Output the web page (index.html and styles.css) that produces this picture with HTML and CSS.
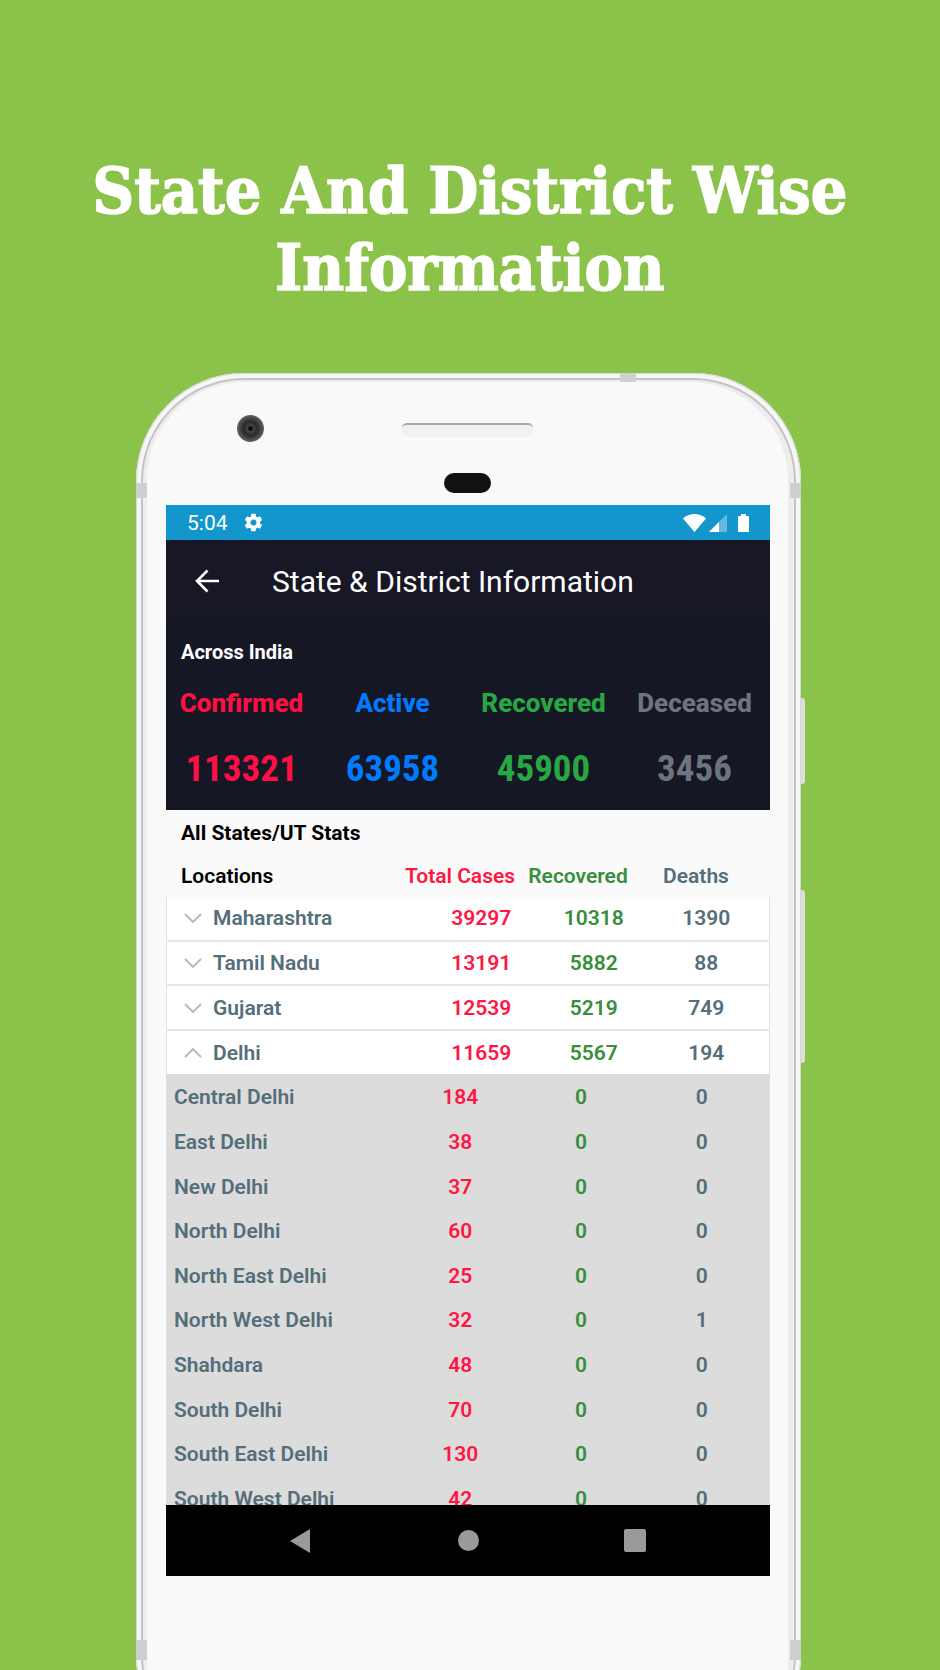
FILE: index.html
```html
<!DOCTYPE html>
<html>

<head>
    <title>State And District Wise Information</title>
    <link rel="stylesheet" href="styles.css">
</head>

<body>
    <h1 class="headline">State And District Wise<br>Information</h1>

    <div class="phone">
        <span class="band band-top"></span>
        <span class="band band-left"></span>
        <span class="band band-right"></span>
        <span class="band band-left-low"></span>
        <span class="band band-right-low"></span>
        <span class="side-btn power"></span>
        <span class="side-btn volume"></span>
        <div class="bezel">
            <span class="camera"></span>
            <span class="speaker"></span>
            <span class="sensor"></span>

            <div class="screen">
                <div class="status-bar">
                    <span class="clock">5:04</span>
                    <svg class="gear" viewBox="0 0 24 24" width="21" height="21">
                        <path fill="#fff" d="M19.4 13c.04-.33.06-.66.06-1s-.02-.67-.06-1l2.1-1.65c.2-.15.25-.42.12-.64l-2-3.46c-.12-.22-.38-.3-.6-.22l-2.5 1c-.52-.4-1.08-.73-1.7-.98l-.37-2.65C14.4 2.17 14.2 2 13.95 2h-4c-.25 0-.46.17-.5.42l-.37 2.65c-.6.25-1.17.6-1.7.98l-2.48-1c-.23-.08-.49 0-.6.22l-2 3.46c-.14.22-.08.49.11.64L4.5 11c-.04.33-.07.67-.07 1s.03.67.07 1l-2.1 1.65c-.2.15-.25.42-.12.64l2 3.46c.12.22.38.3.6.22l2.49-1c.52.4 1.08.73 1.7.98l.37 2.65c.04.25.25.42.5.42h4c.25 0 .46-.17.5-.42l.37-2.65c.6-.25 1.17-.58 1.7-.98l2.48 1c.23.08.49 0 .6-.22l2-3.46c.13-.22.08-.49-.12-.64L19.4 13zM12 15.5c-1.93 0-3.5-1.57-3.5-3.5s1.57-3.5 3.5-3.5 3.5 1.57 3.5 3.5-1.57 3.5-3.5 3.5z" />
                    </svg>
                    <span class="status-icons">
                        <svg viewBox="0 0 23 18" width="23" height="18">
                            <path fill="#fff" d="M0 4.500C3 1.600 7 0 11.500 0S20 1.600 23 4.500L11.500 18z" />
                        </svg>
                        <svg viewBox="0 0 18 18" width="18" height="18">
                            <path fill="#fff" fill-opacity=".35" d="M18 0v18H0z" />
                            <path fill="#fff" d="M10 8v10H0z" />
                        </svg>
                        <svg class="battery" viewBox="0 0 11 18" width="11" height="18">
                            <path fill="#fff" d="M3 2V0h5v2h2a1 1 0 0 1 1 1v14a1 1 0 0 1-1 1H1a1 1 0 0 1-1-1V3a1 1 0 0 1 1-1z" />
                        </svg>
                    </span>
                </div>

                <div class="toolbar">
                    <svg class="back" viewBox="0 0 24 24" width="24" height="24">
                        <path fill="none" stroke="#fff" stroke-width="2.600" d="M24 12H2M12.500 1.500 2 12l10.500 10.500" />
                    </svg>
                    <span class="toolbar-title">State &amp; District Information</span>
                </div>

                <div class="summary">
                    <div class="summary-title">Across India</div>
                    <div class="summary-grid">
                        <div class="label red">Confirmed</div>
                        <div class="label blue">Active</div>
                        <div class="label green">Recovered</div>
                        <div class="label gray">Deceased</div>
                        <div class="count red">113321</div>
                        <div class="count blue">63958</div>
                        <div class="count green">45900</div>
                        <div class="count gray">3456</div>
                    </div>
                </div>

                <div class="table">
                    <div class="table-title">All States/UT Stats</div>
                    <div class="row head-row">
                        <span class="loc">Locations</span>
                        <span class="t-red">Total Cases</span>
                        <span class="t-green">Recovered</span>
                        <span class="t-slate">Deaths</span>
                    </div>

                    <div class="row state-row">
                        <span class="name"><svg class="chev" viewBox="0 0 18 10" width="18" height="10"><path d="M1 1l8 8 8-8" /></svg>Maharashtra</span>
                        <span class="t-red">39297</span>
                        <span class="t-green">10318</span>
                        <span class="t-slate">1390</span>
                    </div>
                    <div class="row state-row">
                        <span class="name"><svg class="chev" viewBox="0 0 18 10" width="18" height="10"><path d="M1 1l8 8 8-8" /></svg>Tamil Nadu</span>
                        <span class="t-red">13191</span>
                        <span class="t-green">5882</span>
                        <span class="t-slate">88</span>
                    </div>
                    <div class="row state-row">
                        <span class="name"><svg class="chev" viewBox="0 0 18 10" width="18" height="10"><path d="M1 1l8 8 8-8" /></svg>Gujarat</span>
                        <span class="t-red">12539</span>
                        <span class="t-green">5219</span>
                        <span class="t-slate">749</span>
                    </div>
                    <div class="row state-row last">
                        <span class="name"><svg class="chev" viewBox="0 0 18 10" width="18" height="10"><path d="M1 9l8-8 8 8" /></svg>Delhi</span>
                        <span class="t-red">11659</span>
                        <span class="t-green">5567</span>
                        <span class="t-slate">194</span>
                    </div>

                    <div class="districts">
                        <div class="row district-row"><span class="name">Central Delhi</span><span class="t-red">184</span><span class="t-green">0</span><span class="t-slate">0</span></div>
                        <div class="row district-row"><span class="name">East Delhi</span><span class="t-red">38</span><span class="t-green">0</span><span class="t-slate">0</span></div>
                        <div class="row district-row"><span class="name">New Delhi</span><span class="t-red">37</span><span class="t-green">0</span><span class="t-slate">0</span></div>
                        <div class="row district-row"><span class="name">North Delhi</span><span class="t-red">60</span><span class="t-green">0</span><span class="t-slate">0</span></div>
                        <div class="row district-row"><span class="name">North East Delhi</span><span class="t-red">25</span><span class="t-green">0</span><span class="t-slate">0</span></div>
                        <div class="row district-row"><span class="name">North West Delhi</span><span class="t-red">32</span><span class="t-green">0</span><span class="t-slate">1</span></div>
                        <div class="row district-row"><span class="name">Shahdara</span><span class="t-red">48</span><span class="t-green">0</span><span class="t-slate">0</span></div>
                        <div class="row district-row"><span class="name">South Delhi</span><span class="t-red">70</span><span class="t-green">0</span><span class="t-slate">0</span></div>
                        <div class="row district-row"><span class="name">South East Delhi</span><span class="t-red">130</span><span class="t-green">0</span><span class="t-slate">0</span></div>
                        <div class="row district-row"><span class="name">South West Delhi</span><span class="t-red">42</span><span class="t-green">0</span><span class="t-slate">0</span></div>
                    </div>
                </div>

                <div class="nav-bar">
                    <svg viewBox="0 0 20 24" width="20" height="24"><path fill="#9a9a9a" d="M20 0v24L0 12z" /></svg>
                    <span class="nav-home"></span>
                    <span class="nav-recent"></span>
                </div>
            </div>
        </div>
    </div>
</body>

</html>
```

FILE: styles.css
```css
html,
body {
    height: 1670px;
    overflow: hidden;
}

body {
    margin: 0;
    background: #8bc34a;
    font-family: Roboto, "Liberation Sans", sans-serif;
}

.headline {
    margin: 0;
    padding-top: 152px;
    height: 373px;
    box-sizing: border-box;
    text-align: center;
    color: #fff;
    font-family: "DejaVu Serif", serif;
    font-stretch: condensed;
    font-weight: 700;
    font-size: 64px;
    line-height: 77px;
    -webkit-text-stroke: 1.5px #fff;
}

/* phone body */
.phone {
    position: relative;
    width: 665px;
    height: 1390px;
    margin-left: 136px;
    box-sizing: border-box;
    padding: 9px 13px 0 11px;
    border-radius: 108px;
    background: #ededed;
    box-shadow: inset 0 0 0 1px #d8d8d8, inset 0 0 0 5px #f6f6f6, inset 0 0 0 7px #c4c4c4;
}

.bezel {
    position: relative;
    height: 100%;
    padding: 123px 16px 0 19px;
    box-sizing: border-box;
    border-radius: 98px;
    background: #f9f9f9;
}

.band {
    position: absolute;
    background: #cfcfcf;
}

.band-top {
    left: 484px;
    top: 0;
    width: 16px;
    height: 9px;
}

.band-left,
.band-right {
    top: 110px;
    width: 11px;
    height: 15px;
}

.band-left-low,
.band-right-low {
    top: 1267px;
    width: 11px;
    height: 20px;
}

.band-left,
.band-left-low {
    left: 0;
}

.band-right,
.band-right-low {
    right: 0;
}

.side-btn {
    position: absolute;
    right: -4px;
    width: 4px;
    background: #dedede;
    border-radius: 0 3px 3px 0;
}

.power {
    top: 325px;
    height: 86px;
}

.volume {
    top: 517px;
    height: 173px;
}

.camera {
    position: absolute;
    left: 90px;
    top: 33px;
    width: 27px;
    height: 27px;
    border-radius: 50%;
    background: radial-gradient(circle, #111 0, #111 2px, #444 3px, #2a2a2a 7px, #555 12px, #666 14px);
}

.speaker {
    position: absolute;
    left: 255px;
    top: 41px;
    width: 131px;
    height: 14px;
    box-sizing: border-box;
    border-top: 2px solid #a9a9a9;
    border-radius: 5px;
    background: #f1f1f1;
}

.sensor {
    position: absolute;
    left: 297px;
    top: 91px;
    width: 47px;
    height: 20px;
    border-radius: 10px;
    background: #111;
}

/* screen */
.screen {
    display: flex;
    flex-direction: column;
    width: 604px;
    height: 1071px;
    overflow: hidden;
}

.status-bar {
    display: flex;
    align-items: center;
    flex: 0 0 35px;
    padding: 0 21px;
    background: #1296cc;
    color: #fff;
}

.clock {
    font-size: 21px;
    font-stretch: 92%;
}

.gear {
    margin-left: 15px;
}

.status-icons {
    display: flex;
    align-items: center;
    gap: 3px;
    margin-left: auto;
}

.battery {
    margin-left: 8px;
}

.toolbar {
    display: flex;
    align-items: center;
    flex: 0 0 82px;
    padding-left: 29px;
    background: #171725;
    color: #fff;
}

.toolbar-title {
    margin-left: 53px;
    font-size: 30px;
    font-stretch: 96%;
}

.summary {
    flex: 0 0 188px;
    box-sizing: border-box;
    padding-top: 17px;
    background: #161724;
}

.summary-title {
    padding-left: 15px;
    color: #fff;
    font-size: 20px;
    line-height: 26px;
    font-weight: 700;
    font-stretch: 100%;
}

.summary-grid {
    display: grid;
    grid-template-columns: repeat(4, 1fr);
    margin-top: 22px;
    text-align: center;
}

.label {
    font-size: 26px;
    line-height: 32px;
    font-weight: 800;
    font-stretch: 99%;
}

.count {
    margin-top: 28px;
    font-size: 37px;
    line-height: 44px;
    font-weight: 700;
    font-stretch: 82%;
}

.red {
    color: #ff0f43;
}

.blue {
    color: #007bff;
}

.green {
    color: #28a745;
}

.gray {
    color: #6c757d;
}

/* table */
.table {
    flex: 1;
    min-height: 0;
    overflow: hidden;
    background: #fafafa;
    font-size: 21px;
    font-weight: 600;
    font-stretch: 95%;
}

.table-title {
    height: 44px;
    padding-left: 15px;
    line-height: 46px;
    font-weight: 700;
    color: #000;
}

.row {
    display: grid;
    align-items: center;
    text-align: center;
}

.row .name,
.row .loc {
    text-align: left;
}

.head-row {
    height: 43px;
    grid-template-columns: 220px 118px 118px 118px;
    padding-left: 15px;
}

.loc {
    color: #000;
}

.state-row {
    height: 42.700px;
    grid-template-columns: 259px 112.500px 112.500px 112.500px;
    background: #fff;
    border-bottom: 2px solid #e6e6e6;
    box-shadow: inset 1px 0 #e2e2e2, inset -1px 0 #e2e2e2;
}

.state-row.last {
    height: 43px;
    border-bottom: 0;
}

.state-row .name {
    display: flex;
    align-items: center;
    padding-left: 18px;
}

.chev {
    margin-right: 11px;
    fill: none;
    stroke: #bbb;
    stroke-width: 2;
}

.name,
.t-slate {
    color: #546e7a;
}

.t-red {
    color: #ff1744;
}

.t-green {
    color: #388e3c;
}

.districts {
    padding-top: 1px;
    background: #dcdcdc;
}

.district-row {
    height: 44.600px;
    grid-template-columns: 226px 120.700px 120.700px 120.700px;
    padding-left: 8px;
}

.nav-bar {
    display: flex;
    align-items: center;
    flex: 0 0 71px;
    background: #000;
    padding-left: 124px;
}

.nav-home {
    width: 21px;
    height: 21px;
    margin-left: 148px;
    border-radius: 50%;
    background: #9a9a9a;
}

.nav-recent {
    width: 22px;
    height: 23px;
    margin-left: 145px;
    border-radius: 2px;
    background: #9a9a9a;
}
```
